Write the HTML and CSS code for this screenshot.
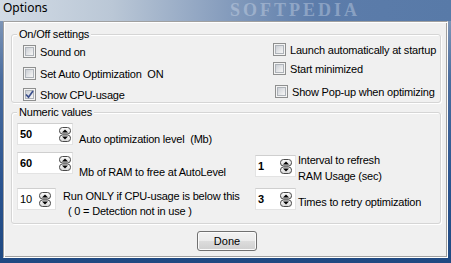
FILE: index.html
```html
<!DOCTYPE html>
<html lang="en">

<head>
    <meta charset="utf-8">
    <meta name="viewport" content="width=device-width, initial-scale=1.0">
    <title>Options</title>
    <link rel="stylesheet" href="styles.css">
</head>

<body>
    <div class="window">
        <div class="titlebar">
            <span class="title">Options</span>
            <span class="mark big">SOFTPEDIA</span>
        </div>

        <div class="client">
            <fieldset class="group onoff">
                <legend>On/Off settings</legend>
                <div class="cols">
                    <div class="col">
                        <label class="check c1"><span class="box"></span>Sound on</label>
                        <label class="check c2"><span class="box"></span>Set Auto Optimization  ON</label>
                        <label class="check c3"><span class="box on"><svg width="9" height="9" viewBox="0 0 9 9"><path d="M1 4.5 L3.5 7.2 L8 1" fill="none" stroke="#3b4f8c" stroke-width="1.7"/></svg></span>Show CPU-usage</label>
                    </div>
                    <div class="col">
                        <label class="check c4"><span class="box"></span>Launch automatically at startup</label>
                        <label class="check c5"><span class="box"></span>Start minimized</label>
                        <label class="check c6"><span class="box"></span>Show Pop-up when optimizing</label>
                    </div>
                </div>
            </fieldset>

            <fieldset class="group numeric">
                <legend>Numeric values</legend>
                <div class="cols">
                    <div class="col">
                        <div class="spin n1">
                            <div class="field wide"><b>50</b><svg class="arrows" width="12" height="15" viewBox="0 0 12 15"><use href="#updown"/></svg></div>
                            <span class="lbl">Auto optimization level  (Mb)</span>
                        </div>
                        <div class="spin n2">
                            <div class="field wide"><b>60</b><svg class="arrows" width="12" height="15" viewBox="0 0 12 15"><use href="#updown"/></svg></div>
                            <span class="lbl">Mb of RAM to free at AutoLevel</span>
                        </div>
                        <div class="spin n3">
                            <div class="field narrow"><span>10</span><svg class="arrows" width="12" height="15" viewBox="0 0 12 15"><use href="#updown"/></svg></div>
                            <span class="lbl">Run ONLY if CPU-usage is below this<span class="indent">( 0 = Detection not in use )</span></span>
                        </div>
                    </div>
                    <div class="col">
                        <div class="spin n4">
                            <div class="field mid"><b>1</b><svg class="arrows" width="12" height="15" viewBox="0 0 12 15"><use href="#updown"/></svg></div>
                            <span class="lbl">Interval to refresh<br>RAM Usage (sec)</span>
                        </div>
                        <div class="spin n5">
                            <div class="field mid"><b>3</b><svg class="arrows" width="12" height="15" viewBox="0 0 12 15"><use href="#updown"/></svg></div>
                            <span class="lbl">Times to retry optimization</span>
                        </div>
                    </div>
                </div>
            </fieldset>

            <div class="actions">
                <button class="done">Done</button>
            </div>
        </div>
    </div>

    <svg width="0" height="0" class="defs">
        <defs>
            <linearGradient id="btn" x1="0" y1="0" x2="0" y2="1">
                <stop offset="0" stop-color="#ffffff"/>
                <stop offset="1" stop-color="#d4d4d4"/>
            </linearGradient>
            <g id="updown">
                <rect x="0.5" y="0.5" width="11" height="6.5" rx="3" fill="url(#btn)" stroke="#4a4a4a"/>
                <rect x="0.5" y="8" width="11" height="6.5" rx="3" fill="url(#btn)" stroke="#4a4a4a"/>
                <path d="M3 5.5 L6 2.5 L9 5.5 Z" fill="#000"/>
                <path d="M3 9.5 L9 9.5 L6 12.5 Z" fill="#000"/>
            </g>
        </defs>
    </svg>
</body>

</html>
```

FILE: styles.css
```css
* {
    box-sizing: border-box;
}

body {
    margin: 0;
    width: 451px;
    height: 263px;
    overflow: hidden;
    font-family: "Liberation Sans", Arial, sans-serif;
    font-size: 11px;
    letter-spacing: -0.2px;
    color: #000;
}

.defs {
    position: absolute;
}

.window {
    height: 263px;
    display: flex;
    flex-direction: column;
    background: linear-gradient(to bottom, #8fa3bf 0%, #4a6d9f 30%, #2a5490 70%, #1f4982 100%);
}

.titlebar {
    height: 21px;
    position: relative;
    background: linear-gradient(to right, #d2dbe5 0%, #bac7d6 25%, #8aa0bf 48%, #5c7caa 70%, #587aa8 100%);
}

.title {
    font-family: "Noto Sans", sans-serif;
    font-size: 12px;
    letter-spacing: 0;
    line-height: 16px;
    padding-left: 3px;
}

.mark {
    position: absolute;
    font-family: "Liberation Serif", serif;
    font-weight: bold;
    white-space: nowrap;
    pointer-events: none;
}

.mark.big {
    left: 230px;
    top: 0;
    font-size: 18px;
    letter-spacing: 3px;
    color: rgba(225, 232, 244, 0.35);
}

.client {
    flex: 1;
    margin: 0 3px 5px;
    background: #f0f0f0;
    border: 1px solid;
    border-color: #a0a0a0 #ffffff #ffffff #a0a0a0;
    box-shadow: inset 1px 1px #ffffff, inset -1px -1px #a0a0a0;
    padding: 0 6px 0 7px;
    display: flex;
    flex-direction: column;
}

.group {
    margin: 0;
    padding: 0;
    min-width: 0;
    border: 1px solid #d5d5d5;
    border-radius: 3px;
    box-shadow: inset 1px 1px #ffffff, 1px 1px #ffffff;
}

.group legend {
    margin-left: 5px;
    padding: 0 2px;
    line-height: 12px;
    background: #f0f0f0;
}

.onoff {
    margin-top: 6px;
}

.numeric {
    margin-top: 3px;
}

.cols {
    display: grid;
}

.onoff .cols {
    grid-template-columns: 250px 1fr;
    padding: 0 0 1px 11px;
}

.numeric .cols {
    grid-template-columns: 238px 1fr;
    padding: 0 0 13px 5px;
}

.col {
    display: flex;
    flex-direction: column;
    align-items: flex-start;
}

.check {
    display: flex;
    align-items: center;
    gap: 4px;
    height: 13px;
    white-space: pre;
}

.c1 { margin-top: 5px; }
.c2 { margin-top: 9px; }
.c3 { margin-top: 8px; }
.c4 { margin-top: 3px; }
.c5 { margin-top: 6px; }
.c6 { margin-top: 10px; margin-left: 2px; }

.box {
    width: 13px;
    height: 13px;
    flex: none;
    border: 1px solid #8e8f8f;
    padding: 1px;
    background: #f4f4f4;
    display: flex;
}

.box::before {
    content: "";
    flex: 1;
    border: 1px solid #aeb3b9;
    background: linear-gradient(135deg, #cbcfd5 0%, #e6e7e9 60%, #f6f6f6 100%);
}

.box.on {
    position: relative;
}

.box.on svg {
    position: absolute;
    left: 1px;
    top: 1px;
}

.spin {
    display: flex;
    align-items: flex-start;
    height: 22px;
    white-space: pre;
}

.field {
    height: 22px;
    flex: none;
    display: flex;
    align-items: center;
    justify-content: space-between;
    background: #fff;
    border: 1px solid;
    border-color: #cfcfcf #e3e3e3 #e3e3e3 #e3e3e3;
    padding: 0 0 0 2px;
}

.field.wide { width: 56px; padding-right: 1px; }
.field.narrow { width: 39px; padding-right: 4px; }
.field.mid { width: 41px; padding-right: 3px; }

.lbl {
    line-height: 13px;
}

.n1 { margin-top: 5px; }
.n2 { margin-top: 7px; }
.n3 { margin-top: 14px; }
.n4 { margin-top: 37px; }
.n5 { margin-top: 11px; }

.n1 .lbl { margin: 10px 0 0 6px; }
.n2 .lbl { margin: 14px 0 0 6px; }
.n3 .lbl { margin: 1px 0 0 7px; line-height: 15px; }
.n4 .lbl { margin: -3px 0 0 2px; line-height: 16px; }
.n5 .lbl { margin: 8px 0 0 2px; }

.indent {
    display: block;
    padding-left: 5px;
}

.actions {
    display: flex;
    justify-content: center;
    margin-top: 7px;
}

.done {
    width: 60px;
    height: 20px;
    margin-left: 2px;
    font-family: "Liberation Sans", Arial, sans-serif;
    font-size: 11px;
    color: #000;
    border: 1px solid #707070;
    border-radius: 3px;
    background: linear-gradient(to bottom, #f2f2f2 0%, #ebebeb 50%, #dddddd 50%, #cfcfcf 100%);
    box-shadow: inset 0 0 0 1px #fbfbfb;
    padding: 0;
}
```
